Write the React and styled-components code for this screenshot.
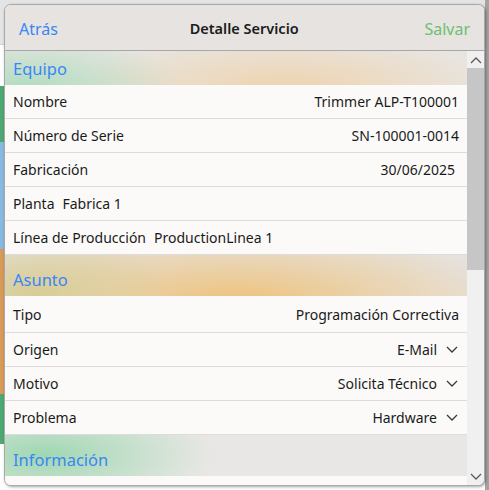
import React from 'react';
import styled, { createGlobalStyle } from 'styled-components';

const GlobalStyle = createGlobalStyle`
  html, body {
    margin: 0;
    padding: 0;
    width: 489px;
    height: 490px;
    overflow: hidden;
    font-family: "Noto Sans", "Liberation Sans", sans-serif;
  }
`;

const equipo = [
  { label: 'Nombre', value: 'Trimmer ALP-T100001' },
  { label: 'Número de Serie', value: 'SN-100001-0014' },
  { label: 'Fabricación', value: '30/06/2025', inset: true },
  { label: 'Planta', inline: 'Fabrica 1' },
  { label: 'Línea de Producción', inline: 'ProductionLinea 1' },
];

const asunto = [
  { label: 'Tipo', value: 'Programación Correctiva', tall: true },
  { label: 'Origen', value: 'E-Mail', select: true },
  { label: 'Motivo', value: 'Solicita Técnico', select: true },
  { label: 'Problema', value: 'Hardware', select: true },
];

const bands = [
  { h: 41, c: '#ffffff' },
  { h: 56, c: '#4ea872' },
  { h: 107, c: '#87badf' },
  { h: 145, c: '#d89a58' },
  { h: 50, c: '#4ea872' },
  { h: 45, c: '#ffffff' },
];

const Chevron = ({ up }) => (
  <svg width="12" height="8" viewBox="0 0 12 8">
    <path
      d={up ? 'M1 7 L6 2 L11 7' : 'M1 1 L6 6 L11 1'}
      fill="none"
      stroke="currentColor"
      strokeWidth="1.3"
    />
  </svg>
);

const App = () => (
  <Page>
    <GlobalStyle />
    <Backdrop>
      <TopStrip />
      <Bands>
        {bands.map((b, i) => (
          <Band key={i} style={{ height: b.h, background: b.c }} />
        ))}
      </Bands>
    </Backdrop>
    <Modal>
      <NavBar>
        <NavButton color="#3a86f5">Atrás</NavButton>
        <Title>Detalle Servicio</Title>
        <NavButton color="#6cc06f">Salvar</NavButton>
      </NavBar>
      <Body>
        <Scroller>
          <SectionHeader variant="equipo">Equipo</SectionHeader>
          {equipo.map(row => (
            <Row key={row.label}>
              <Label>
                {row.label}
                {row.inline && <Inline>{row.inline}</Inline>}
              </Label>
              {row.value && <Value $inset={row.inset}>{row.value}</Value>}
            </Row>
          ))}
          <SectionHeader variant="asunto" $tall>Asunto</SectionHeader>
          {asunto.map(row => (
            <Row key={row.label} $tall={row.tall}>
              <Label>{row.label}</Label>
              <Value>
                {row.value}
                {row.select && (
                  <Caret>
                    <Chevron />
                  </Caret>
                )}
              </Value>
            </Row>
          ))}
          <SectionHeader variant="info" $tall>Información</SectionHeader>
          <Row />
        </Scroller>
        <ScrollBar>
          <ScrollArrow>
            <Chevron up />
          </ScrollArrow>
          <Track>
            <Thumb />
          </Track>
          <ScrollArrow>
            <Chevron />
          </ScrollArrow>
        </ScrollBar>
      </Body>
    </Modal>
  </Page>
);

export default App;

const Page = styled.div`
  position: relative;
  width: 489px;
  height: 490px;
  background: #ffffff;
  overflow: hidden;
`;

const Backdrop = styled.div`
  display: flex;
  flex-direction: column;
  height: 100%;
  border-right: 4px solid #a3a3a3;
  box-sizing: border-box;
`;

const TopStrip = styled.div`
  height: 44px;
  flex-shrink: 0;
  background: #e4e4e4;
  border-bottom: 1px solid #d4d4d4;
`;

const Bands = styled.div`
  display: flex;
  flex-direction: column;
  width: 12px;
`;

const Band = styled.div`
  flex-shrink: 0;
`;

const Modal = styled.div`
  position: absolute;
  top: 4px;
  left: 4px;
  width: 479px;
  height: 480px;
  display: flex;
  flex-direction: column;
  border: 1px solid #a9a9a9;
  border-radius: 7px;
  overflow: hidden;
  background: #f0f0f0;
  box-shadow: 1px 1px 3px rgba(0, 0, 0, 0.35);
`;

const NavBar = styled.div`
  height: 45px;
  flex-shrink: 0;
  display: flex;
  align-items: center;
  justify-content: space-between;
  padding: 0 14px;
  background: #e6e3e1;
  border-bottom: 1px solid #a7a7a7;
`;

const NavButton = styled.span`
  font-size: 16px;
  color: ${p => p.color};
  padding-top: 3px;
`;

const Title = styled.span`
  font-size: 14.5px;
  font-weight: 600;
  color: #1b1b1b;
  margin-left: 6px;
`;

const Body = styled.div`
  flex: 1;
  display: flex;
  min-height: 0;
`;

const Scroller = styled.div`
  flex: 1;
  overflow: hidden;
  background: #e9e7e5;
`;

const gradients = {
  equipo:
    'radial-gradient(ellipse 160px 60px at 20px 40px, rgba(160,218,182,0.8), transparent), radial-gradient(ellipse 220px 55px at 280px 38px, rgba(240,208,165,0.85), transparent), #e8e5e1',
  asunto:
    'radial-gradient(ellipse 140px 70px at 30px 40px, rgba(215,205,150,1), transparent), radial-gradient(ellipse 280px 70px at 230px 45px, rgba(238,195,125,1), transparent), #e6e2dd',
  info:
    'radial-gradient(ellipse 170px 60px at 40px 20px, rgba(155,215,175,0.95), transparent), #e9e7e5',
};

const SectionHeader = styled.div`
  height: ${p => (p.$tall ? 41 : 34)}px;
  display: flex;
  align-items: flex-end;
  padding: 0 8px 5px;
  box-sizing: border-box;
  font-size: 16.5px;
  color: #3a86f5;
  background: ${p => gradients[p.variant]};
`;

const Row = styled.div`
  height: ${p => (p.$tall ? 37 : 34)}px;
  box-sizing: border-box;
  display: flex;
  align-items: center;
  justify-content: space-between;
  padding: 0 8px;
  background: #fbfaf9;
  border-bottom: 1px solid #dedcda;
  font-size: 14px;
  color: #1a1a1a;
`;

const Label = styled.span`
  white-space: nowrap;
`;

const Inline = styled.span`
  margin-left: 8px;
`;

const Value = styled.span`
  display: flex;
  align-items: center;
  white-space: nowrap;
  margin-right: ${p => (p.$inset ? 4 : 0)}px;
`;

const Caret = styled.span`
  display: inline-flex;
  color: #3a3a3a;
  margin-left: 9px;
  margin-right: 1px;
`;

const ScrollBar = styled.div`
  width: 17px;
  flex-shrink: 0;
  display: flex;
  flex-direction: column;
  background: #f0f0f0;
`;

const ScrollArrow = styled.div`
  height: 17px;
  display: flex;
  align-items: center;
  justify-content: center;
  color: #5a5a5a;
`;

const Track = styled.div`
  flex: 1;
  display: flex;
  flex-direction: column;
`;

const Thumb = styled.div`
  height: 202px;
  background: #c6c6c6;
`;
